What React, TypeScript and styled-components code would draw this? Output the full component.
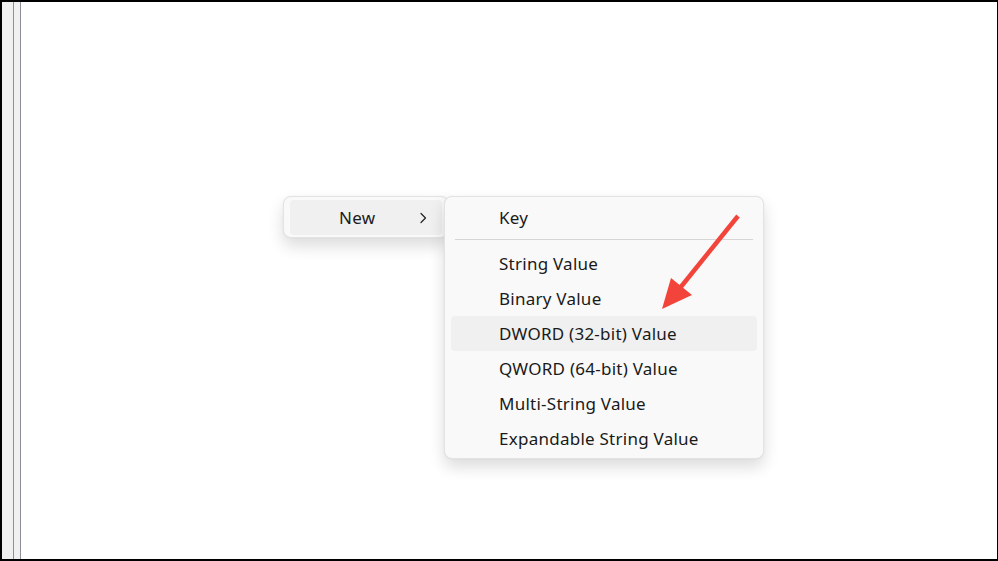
import React from "react";
import styled, { createGlobalStyle } from "styled-components";

const Global = createGlobalStyle`
  html, body { margin: 0; padding: 0; background: #fff; }
  body { font-family: "Noto Sans", "Open Sans", sans-serif; }
`;

const Frame = styled.div`
  box-sizing: border-box;
  width: 998px;
  height: 561px;
  border-style: solid;
  border-color: #000;
  border-width: 2px 1px 2px 2px;
  display: flex;
  position: relative;
  overflow: hidden;
  background: #fff;
`;

const Strip = styled.div<{ $w: number }>`
  width: ${(p) => p.$w}px;
  background: #f0f0f0;
  border-right: 1px solid #8d9096;
  flex: none;
`;

const Main = styled.div`
  flex: 1;
  background: #fff;
`;

const Menu = styled.div<{ $left: number; $top: number; $w: number }>`
  position: absolute;
  left: ${(p) => p.$left}px;
  top: ${(p) => p.$top}px;
  width: ${(p) => p.$w}px;
  box-sizing: border-box;
  background: #f9f9f9;
  border: 1px solid #e3e3e3;
  border-radius: 8px;
  box-shadow: 0 8px 16px rgba(0, 0, 0, 0.14), 0 0 2px rgba(0, 0, 0, 0.06);
  padding: 3px 6px 2px;
  display: flex;
  flex-direction: column;
`;

const Item = styled.div<{ $hl?: boolean; $pad: number }>`
  height: 35px;
  display: flex;
  align-items: center;
  padding-left: ${(p) => p.$pad}px;
  padding-right: 14px;
  border-radius: 4px;
  background: ${(p) => (p.$hl ? "#f0f0f0" : "transparent")};
  font-size: 17px;
  color: #1a1a1a;
  letter-spacing: 0.25px;
`;

const Label = styled.span`
  flex: 1;
`;

const Sep = styled.div`
  height: 1px;
  background: #d6d6d6;
  margin: 4px 4px 6px 4px;
`;

const Arrow = styled.svg`
  position: absolute;
  pointer-events: none;
`;

const Chevron = () => (
  <svg width="10" height="12" viewBox="0 0 10 12">
    <path d="M3 1.5 L7.5 6 L3 10.5" fill="none" stroke="#222" strokeWidth="1.2" strokeLinecap="round" strokeLinejoin="round" />
  </svg>
);

const items = [
  "String Value",
  "Binary Value",
  "DWORD (32-bit) Value",
  "QWORD (64-bit) Value",
  "Multi-String Value",
  "Expandable String Value",
];

export default function App() {
  return (
    <>
      <Global />
      <Frame>
        <Strip $w={11} />
        <Strip $w={6} />
        <Main />
        <Menu $left={281} $top={194} $w={166}>
          <Item $hl $pad={49}>
            <Label>New</Label>
            <Chevron />
          </Item>
        </Menu>
        <Menu $left={442} $top={194} $w={320}>
          <Item $pad={48}>
            <Label>Key</Label>
          </Item>
          <Sep />
          {items.map((t) => (
            <Item key={t} $pad={48} $hl={t.startsWith("DWORD")}>
              <Label>{t}</Label>
            </Item>
          ))}
        </Menu>
        <Arrow width="998" height="561" viewBox="0 0 998 561" style={{ left: -2, top: -2 }}>
          <line x1="738" y1="216" x2="680" y2="288" stroke="#f2443a" strokeWidth="4.5" strokeLinecap="butt" />
          <polygon points="662,309 671,278 692,295" fill="#f2443a" />
        </Arrow>
      </Frame>
    </>
  );
}
